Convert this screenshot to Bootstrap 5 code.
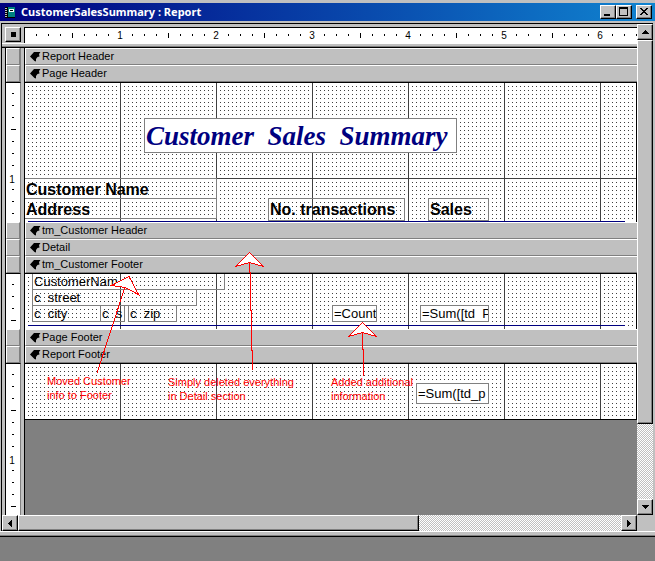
<!DOCTYPE html>
<html lang="en">
<head>
<meta charset="utf-8">
<meta name="viewport" content="width=device-width, initial-scale=1">
<title>CustomerSalesSummary : Report</title>
<link href="https://cdn.jsdelivr.net/npm/bootstrap@5.3.0/dist/css/bootstrap.min.css" rel="stylesheet">
<style>
:root{--face:#c0c0c0;--shade:#808080;--ink:#000;--ui:"Liberation Sans",Arial,sans-serif}
body{background:var(--shade);font-family:var(--ui);color:var(--ink);height:100vh;overflow:hidden;line-height:1}
.app-window{height:calc(100vh - 24px);background:var(--face);padding-top:3px;border-bottom:1px solid #000}
.title-strip{height:18px;background:linear-gradient(90deg,#000080,#1084d0);color:#fff;padding:0 3px 0 5px}
.title-strip h1{font:bold 11px/18px "Noto Sans","Open Sans",sans-serif;margin:0 0 0 5px}
.bevel{background:var(--face);border:1px solid;border-color:#fff #000 #000 #fff;box-shadow:inset -1px -1px var(--shade);border-radius:0;padding:0;color:#000;display:flex;align-items:center;justify-content:center;flex:none}
.cap-btn{width:16px;height:14px}
.client{border-top:1px solid #000;border-left:1px solid #000;margin:2px 2px 0 1px;min-height:0}
.pane{min-width:0;min-height:0}
.frame-foot{height:5px;border-top:1px solid #fff;border-bottom:1px solid var(--shade);flex:none}
.gutter{width:23px;flex:none;border-left:3px solid var(--face);border-right:1px solid #000;background:var(--face)}
.gutter-in{width:16px;height:100%;border-left:1px solid #000;border-right:1px solid var(--shade);background:#fff}
.ruler-row{height:19px;padding-top:3px}
.ruler{background:#fff;height:100%;min-width:0;border-top:1px solid #000}
.splitter{height:5px;border-top:1px solid #fff;border-bottom:1px solid #000;background:linear-gradient(var(--face) 2px,var(--shade) 2px);flex:none}
.corner-btn{height:15px;width:16px}
.pick{height:17px;width:14px;background:var(--face);border:1px solid;border-color:#fff var(--shade) var(--shade) #fff;padding:0;display:block}
.bar{height:17px;background:var(--face);border-top:1px solid #fff;border-bottom:1px solid var(--shade);border-left:1px solid #fff;padding-left:4px;min-width:0}
.bar h2{font:11px/15px var(--ui);margin:0 0 0 1px}
.sheet{position:relative;overflow:hidden;flex:1 1 0;min-width:0;border-right:1px solid #000;background-color:#fff;
background-image:linear-gradient(90deg,transparent 95px,#404040 95px),linear-gradient(transparent 95px,#404040 95px),linear-gradient(90deg,#fff 3px,transparent 3px),linear-gradient(#fff 3px,#404040 3px);
background-size:96px 96px,96px 96px,4px 4px,4px 4px}
.topline .sheet,.topline .gutter-in{border-top:1px solid #000}
.h-page{height:140px}.h-group{height:56px}.h-report{height:57px}
.h-report .sheet{border-bottom:1px solid #000}
.ctl{position:absolute;border:1px solid var(--shade);background:transparent;border-radius:0;padding:0 0 0 1px;overflow:hidden;white-space:pre;font:13px/15px var(--ui);color:#000;height:17px}
.ctl.solid{background:#fff}
.cap{font-weight:bold;font-size:16px;line-height:21px;height:23px}
.cap-name{left:-1px;top:95px;width:193px;height:21px}
.cap-addr{left:-1px;top:115px;width:193px;height:21px}
.cap-tran{left:243px;top:115px;width:137px}
.cap-sale{left:403px;top:115px;width:61px}
.headline{left:119px;top:35px;width:313px;height:35px;font:italic bold 27px/34px "Liberation Serif","Times New Roman",serif;color:#000080;margin:0}
.rule-line{position:absolute;left:3px;width:597px;height:1px;background:#000080}
.r-page{top:138px}.r-group{top:51px}
.f-name{left:7px;top:-1px;width:193px}
.f-street{left:7px;top:15px;width:165px}
.f-city{left:7px;top:31px;width:69px}
.f-state{left:75px;top:31px;width:25px}
.f-zip{left:103px;top:31px;width:49px}
.f-count{left:307px;top:31px;width:45px}
.f-sum{left:395px;top:31px;width:69px}
.f-total{left:391px;top:19px;width:73px;height:21px}
.void{background:var(--shade)}
.track{background:repeating-conic-gradient(#fff 0 25%,var(--face) 0 50%) 0 0/2px 2px}
.vbar{width:16px;flex:none}
.hbar{height:16px;flex:none}
.sb{width:16px;height:16px}
.hthumb{flex:400 1 0}.hrest{flex:203 1 0}
.vthumb{flex:384 1 0}.vrest{flex:76 1 0}
.notes{position:absolute;left:0;top:0;pointer-events:none}
svg{display:block;flex:none}
svg text{font-family:var(--ui)}
</style>
</head>
<body>
<main class="app-window d-flex flex-column position-relative">
  <header class="title-strip d-flex align-items-center flex-shrink-0">
    <svg width="11" height="12" viewBox="0 0 11 12" shape-rendering="crispEdges"><path d="M0 1H10V12H0z" fill="#000"/><path d="M3 1H10V11H3z" fill="#008080"/><path d="M4 3H9V6H4z" fill="#fff"/><path d="M5 4H8V5H5z" fill="#000"/><path d="M0 2h2v1H0zM0 4h2v1H0zM0 6h2v1H0zM0 8h2v1H0zM0 10h2v1H0z" fill="#c0c0c0"/></svg>
    <h1 class="flex-grow-1 text-nowrap">CustomerSalesSummary : Report</h1>
    <button type="button" class="bevel cap-btn" aria-label="Minimize"><svg width="12" height="10" shape-rendering="crispEdges"><path d="M2 7h6v2H2z"/></svg></button>
    <button type="button" class="bevel cap-btn" aria-label="Maximize"><svg width="12" height="10" shape-rendering="crispEdges"><path d="M1 0h9v9H1zM2 2v6h7V2z" fill-rule="evenodd"/></svg></button>
    <button type="button" class="bevel cap-btn ms-1" aria-label="Close"><svg width="12" height="10" shape-rendering="crispEdges"><path d="M2 1h2v1h1v1h2V2h1V1h2v1H9v1H8v1H7v1h1v1h1v1h1v1H8V7H7V6H5v1H4v1H2V7h1V6h1V5h1V4H4V3H3V2H2z"/></svg></button>
  </header>

  <div class="client d-flex flex-column flex-grow-1">
    <div class="pane d-flex flex-grow-1">
      <div class="pane d-flex flex-column flex-grow-1">
        <div class="ruler-row d-flex flex-shrink-0">
          <div class="gutter"><button type="button" class="bevel corner-btn" aria-label="Select report"><svg width="12" height="13" shape-rendering="crispEdges"><path d="M4 4h5v5H4z"/></svg></button></div>
          <div class="ruler flex-grow-1">
            <svg width="100%" height="15" shape-rendering="crispEdges">
              <defs><pattern id="hticks" width="96" height="15" patternUnits="userSpaceOnUse"><path d="M11 6h1v2h-1zM23 6h1v2h-1zM35 6h1v2h-1zM47 5h1v5h-1zM59 6h1v2h-1zM71 6h1v2h-1zM83 6h1v2h-1z"/></pattern></defs>
              <rect width="100%" height="15" fill="url(#hticks)"/>
              <g font-size="10" text-anchor="middle"><text x="95" y="11">1</text><text x="191" y="11">2</text><text x="287" y="11">3</text><text x="383" y="11">4</text><text x="479" y="11">5</text><text x="575" y="11">6</text></g>
            </svg>
          </div>
        </div>
        <div class="splitter"></div>

        <section>
          <div class="d-flex"><div class="gutter"><div class="gutter-in"><button type="button" class="pick" aria-label="Select Report Header"></button></div></div>
            <div class="bar d-flex align-items-center flex-grow-1"><svg width="11" height="11"><use href="#flag"/></svg><h2>Report Header</h2></div></div>
          <div class="d-flex"><div class="gutter"><div class="gutter-in"><button type="button" class="pick" aria-label="Select Page Header"></button></div></div>
            <div class="bar d-flex align-items-center flex-grow-1"><svg width="11" height="11"><use href="#flag"/></svg><h2>Page Header</h2></div></div>
          <div class="topline h-page d-flex"><div class="gutter"><div class="gutter-in"><svg width="14" height="100%" shape-rendering="crispEdges"><rect width="14" height="100%" fill="url(#vticks)"/><text x="6" y="100" font-size="10" text-anchor="middle">1</text></svg></div></div>
            <div class="sheet">
              <div class="ctl solid headline">Customer  Sales  Summary</div>
              <div class="ctl cap cap-name">Customer Name</div>
              <div class="ctl cap cap-addr">Address</div>
              <div class="ctl cap cap-tran">No. transactions</div>
              <div class="ctl cap cap-sale">Sales</div>
              <div class="rule-line r-page"></div>
            </div></div>
        </section>

        <section>
          <div class="d-flex"><div class="gutter"><div class="gutter-in"><button type="button" class="pick" aria-label="Select tm_Customer Header"></button></div></div>
            <div class="bar d-flex align-items-center flex-grow-1"><svg width="11" height="11"><use href="#flag"/></svg><h2>tm_Customer Header</h2></div></div>
          <div class="d-flex"><div class="gutter"><div class="gutter-in"><button type="button" class="pick" aria-label="Select Detail"></button></div></div>
            <div class="bar d-flex align-items-center flex-grow-1"><svg width="11" height="11"><use href="#flag"/></svg><h2>Detail</h2></div></div>
          <div class="d-flex"><div class="gutter"><div class="gutter-in"><button type="button" class="pick" aria-label="Select tm_Customer Footer"></button></div></div>
            <div class="bar d-flex align-items-center flex-grow-1"><svg width="11" height="11"><use href="#flag"/></svg><h2>tm_Customer Footer</h2></div></div>
          <div class="topline h-group d-flex"><div class="gutter"><div class="gutter-in"><svg width="14" height="100%" shape-rendering="crispEdges"><rect width="14" height="100%" fill="url(#vticks)"/></svg></div></div>
            <div class="sheet">
              <input class="ctl f-name" aria-label="Customer name" value="CustomerNam">
              <input class="ctl f-street" aria-label="Street" value="c  street">
              <input class="ctl f-city" aria-label="City" value="c  city">
              <input class="ctl f-state" aria-label="State" value="c  s">
              <input class="ctl f-zip" aria-label="Zip" value="c  zip">
              <input class="ctl solid f-count" aria-label="Count" value="=Count">
              <input class="ctl solid f-sum" aria-label="Sum" value="=Sum([td  P">
              <div class="rule-line r-group"></div>
            </div></div>
        </section>

        <section class="d-flex flex-column flex-grow-1">
          <div class="d-flex"><div class="gutter"><div class="gutter-in"><button type="button" class="pick" aria-label="Select Page Footer"></button></div></div>
            <div class="bar d-flex align-items-center flex-grow-1"><svg width="11" height="11"><use href="#flag"/></svg><h2>Page Footer</h2></div></div>
          <div class="d-flex"><div class="gutter"><div class="gutter-in"><button type="button" class="pick" aria-label="Select Report Footer"></button></div></div>
            <div class="bar d-flex align-items-center flex-grow-1"><svg width="11" height="11"><use href="#flag"/></svg><h2>Report Footer</h2></div></div>
          <div class="topline d-flex flex-grow-1"><div class="gutter"><div class="gutter-in"><svg width="14" height="100%" shape-rendering="crispEdges"><rect width="14" height="100%" fill="url(#vticks)"/><text x="6" y="100" font-size="10" text-anchor="middle">1</text></svg></div></div>
            <div class="pane void flex-grow-1 d-flex flex-column"><div class="h-report d-flex">
              <div class="sheet"><input class="ctl solid f-total" aria-label="Total" value="=Sum([td_p"></div></div></div></div>
        </section>
      </div>

      <div class="vbar track d-flex flex-column">
        <button type="button" class="bevel sb" aria-label="Scroll up"><svg width="7" height="4" shape-rendering="crispEdges"><path d="M3 0h1v1h1v1h1v1h1v1H0V3h1V2h1V1h1z"/></svg></button>
        <div class="bevel vthumb"></div><div class="vrest"></div>
        <button type="button" class="bevel sb" aria-label="Scroll down"><svg width="7" height="4" shape-rendering="crispEdges"><path d="M0 0h7v1H6v1H5v1H4v1H3V3H2V2H1V1H0z"/></svg></button>
      </div>
    </div>
    <div class="hbar d-flex">
      <div class="track d-flex flex-grow-1">
        <button type="button" class="bevel sb" aria-label="Scroll left"><svg width="4" height="7" shape-rendering="crispEdges"><path d="M4 0v7H3V6H2V5H1V4H0V3h1V2h1V1h1V0z"/></svg></button>
        <div class="bevel hthumb"></div><div class="hrest"></div>
        <button type="button" class="bevel sb" aria-label="Scroll right"><svg width="4" height="7" shape-rendering="crispEdges"><path d="M0 0v7h1V6h1V5h1V4h1V3H3V2H2V1H1V0z"/></svg></button>
      </div>
      <div class="vbar"></div>
    </div>
  </div>
  <div class="frame-foot"></div>

  <svg class="notes" width="640" height="420">
    <defs>
      <path id="flag" d="M0 5.500 4 1h6.500L9 3 9.500 5.500 7.500 6 6 8 6 10.500 4.500 10z"/>
      <pattern id="vticks" width="14" height="96" patternUnits="userSpaceOnUse"><path d="M6 10h2v1H6zM6 22h2v1H6zM6 34h2v1H6zM5 46h5v1H5zM6 58h2v1H6zM6 70h2v1H6zM6 82h2v1H6z"/></pattern>
    </defs>
    <g fill="none" stroke="#f00" shape-rendering="crispEdges">
      <path d="M125 287 97 373"/><path d="M249.500 262v10h1v38h1v40h1v20"/><path d="M362.500 332v17h1v27"/>
      <g fill="#fff"><path d="M129 276.500 111.500 285.500 125 287.500 138.500 294.500z"/><path d="M249.500 252.500 235.500 266.500 249.500 262.500 263.500 266.500z"/><path d="M362.500 322.500 348.500 336.500 362.500 332.500 376.500 336.500z"/></g>
    </g>
    <g fill="#f00" font-size="11">
      <text x="47" y="385">Moved Customer</text><text x="47" y="399">info to Footer</text>
      <text x="168" y="386">Simply deleted everything</text><text x="168" y="400">in Detail section</text>
      <text x="331" y="386">Added additional</text><text x="331" y="400">information</text>
    </g>
  </svg>
</main>
<script src="https://cdn.jsdelivr.net/npm/bootstrap@5.3.0/dist/js/bootstrap.bundle.min.js"></script>
</body>
</html>
